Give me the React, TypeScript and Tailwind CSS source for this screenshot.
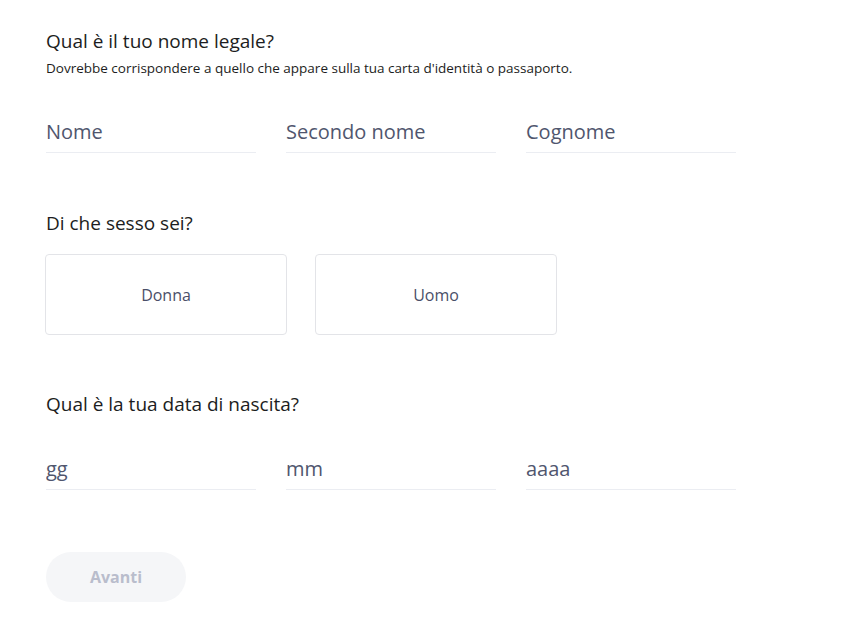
const font = { fontFamily: '"Open Sans", "Noto Sans", sans-serif' };

function LineInput({ placeholder }: { placeholder: string }) {
  return (
    <input
      type="text"
      placeholder={placeholder}
      className="w-[210px] border-b border-[#ebedf2] bg-transparent pb-[6px] text-[20px] leading-[28px] text-[#2b2f45] outline-none placeholder:text-[#50566e]"
    />
  );
}

function ChoiceCard({ label }: { label: string }) {
  return (
    <button
      type="button"
      className="flex h-[81px] w-[242px] items-center justify-center rounded-[4px] border border-[#e3e4e8] bg-white text-[16px] text-[#4a4f68]"
    >
      {label}
    </button>
  );
}

export default function App() {
  return (
    <div className="min-h-screen bg-white pl-[46px] pt-[27px] text-[#1c1d21]" style={font}>
      <h2 className="text-[19px] leading-[28px]">Qual è il tuo nome legale?</h2>
      <p className="mt-[4px] text-[13.5px] leading-[18px]">
        Dovrebbe corrispondere a quello che appare sulla tua carta d'identità o passaporto.
      </p>

      <div className="mt-[41px] flex gap-[30px]">
        <LineInput placeholder="Nome" />
        <LineInput placeholder="Secondo nome" />
        <LineInput placeholder="Cognome" />
      </div>

      <h2 className="mt-[56px] text-[19px] leading-[28px]">Di che sesso sei?</h2>
      <div className="-ml-[1px] mt-[17px] flex gap-[28px]">
        <ChoiceCard label="Donna" />
        <ChoiceCard label="Uomo" />
      </div>

      <h2 className="mt-[55px] text-[19px] leading-[28px]">Qual è la tua data di nascita?</h2>
      <div className="mt-[37px] flex gap-[30px]">
        <LineInput placeholder="gg" />
        <LineInput placeholder="mm" />
        <LineInput placeholder="aaaa" />
      </div>

      <button
        type="button"
        disabled
        className="mt-[62px] h-[50px] w-[140px] rounded-full bg-[#f5f6f8] text-[16px] font-bold text-[#b9bdcc]"
      >
        Avanti
      </button>
    </div>
  );
}
